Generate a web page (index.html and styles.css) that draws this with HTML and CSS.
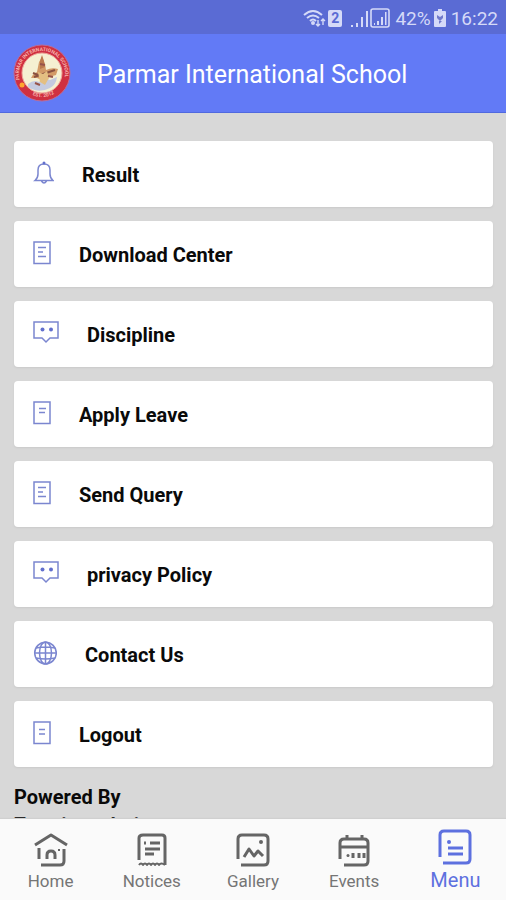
FILE: index.html
```html
<!DOCTYPE html>
<html lang="en">
<head>
<meta charset="utf-8">
<meta name="viewport" content="width=device-width, initial-scale=1">
<title>Parmar International School</title>
<link rel="stylesheet" href="styles.css">
</head>
<body>
<div class="status">
  <svg class="wifi" width="24" height="18" viewBox="0 0 24 18" fill="none" stroke="currentColor" stroke-width="2"><path d="M1 6Q10-2 19 6M4 9Q10 4 16 9M7 12Q10 9 13 12"/><circle cx="10" cy="14" r="1" fill="currentColor"/><path d="M15 11v6M13 15l2 2 2-2M20 16v-6M18 12l2-2 2 2" stroke-width="1.4"/></svg>
  <span class="sim">2</span>
  <svg class="signal" width="18" height="19" viewBox="0 0 18 19" fill="currentColor"><path d="M0 16h2v2H0zM5 14h2v4H5zM10 8h2v10h-2zM15 2h2v16h-2z"/></svg>
  <svg width="20" height="20" viewBox="0 0 20 20"><rect x="1" y="1" width="18" height="18" rx="2" fill="none" stroke="currentColor" stroke-width="1.6"/><path d="M4 15h1v2H4zM7 13h2v4H7zM11 9h2v8h-2zM15 4h1.500v13H15z" fill="currentColor"/></svg>
  <span class="percent">42%</span>
  <svg class="battery" width="12" height="18" viewBox="0 0 12 18"><path d="M4 0h4v2h3q1 0 1 1v14q0 1-1 1H1q-1 0-1-1V3q0-1 1-1h3z" fill="currentColor"/><path d="M3 6l3 2 3-2v3L6 12 3 9zM5 12h3l-3 3z" fill="#7079cb"/></svg>
  <span>16:22</span>
</div>
<header class="header">
  <svg class="logo" width="58" height="58" viewBox="0 0 58 58" role="img" aria-label="School crest">
    <defs><path id="ring-top" d="M10 43A23 23 0 1 1 48 43"/><path id="ring-bottom" d="M12 46A24 24 0 0 0 46 46"/></defs>
    <circle cx="29" cy="29" r="28" fill="#cf3041" stroke="#ba6c98"/>
    <circle cx="29" cy="29" r="20" fill="#f5f0d2" stroke="#efa79a"/>
    <text class="crest-text"><textPath href="#ring-top" startOffset="8">PARMAR INTERNATIONAL SCHOOL</textPath></text>
    <text class="crest-text"><textPath href="#ring-bottom" startOffset="9">EST. 2012</textPath></text>
    <circle cx="9" cy="41" r="2.500" fill="#ffa62f"/>
    <path d="M15 40q6-5 11-2 5-5 11-2l7-3q-1 8-7 11-10 5-18 1-5-1-4-5z" fill="#c5cbe0"/>
    <path d="M18 34q2-4 6-6l2-10 3-5 3 7 1 6q6-3 12-1l-2 6-7 2-4-2-3 5-5-2z" fill="#d39a67"/>
    <path d="M27 17l2-6 2 6 1 6-5 2z" fill="#bb794c"/>
    <path d="M21 33l21-7M20 29l8 3" stroke="#8a5140" stroke-width="2"/>
    <path d="M25 28l5 2 4-3 2 7-4 7-5-3z" fill="#e4bf82"/><path d="M22 39l5 2M35 32l5 1M27 20l5 1" stroke="#975348" stroke-width="2"/>
  </svg>
  <h1 class="title">Parmar International School</h1>
</header>
<main class="content">
  <nav class="list" aria-label="School menu">
    <a class="card" href="#result"><svg class="icon" width="21" height="24" viewBox="0 0 21 24"><path d="M2 19.500Q5 17 5 13V9Q5 3 11 3t6 6v4q0 4 3 6.500zM8.500 20q2.500 4 5 0"/><circle class="dot" cx="11" cy="2" r="1.500"/></svg><span>Result</span></a>
    <a class="card" href="#download"><svg class="icon" width="18" height="24" viewBox="0 0 18 24"><path d="M1 1h16v21.500H1zM5 6.500h8M5 11h5M5 15.500h8"/></svg><span>Download Center</span></a>
    <a class="card" href="#discipline"><svg class="icon" width="26" height="24" viewBox="0 0 26 24"><path d="M1 1h24v16h-8l-4 4-4-4H1z"/><circle class="dot" cx="9.500" cy="8.500" r="2"/><circle class="dot" cx="18" cy="8.500" r="2"/></svg><span>Discipline</span></a>
    <a class="card" href="#leave"><svg class="icon" width="18" height="24" viewBox="0 0 18 24"><path d="M1 1h16v21.500H1zM6 7.500h7M6 11.500h6"/></svg><span>Apply Leave</span></a>
    <a class="card" href="#query"><svg class="icon" width="18" height="24" viewBox="0 0 18 24"><path d="M1 1h16v21.500H1zM5 6.500h8M5 11h5M5 15.500h8"/></svg><span>Send Query</span></a>
    <a class="card" href="#privacy"><svg class="icon" width="26" height="24" viewBox="0 0 26 24"><path d="M1 1h24v16h-8l-4 4-4-4H1z"/><circle class="dot" cx="9.500" cy="8.500" r="2"/><circle class="dot" cx="18" cy="8.500" r="2"/></svg><span>privacy Policy</span></a>
    <a class="card" href="#contact"><svg class="icon" width="24" height="24" viewBox="0 0 24 24"><circle cx="12.500" cy="12" r="10.800"/><path d="M12.500 1v22M1.500 12h22M3 7q9.500-2 19 0M3 17q9.500 2 19 0"/><ellipse cx="12.500" cy="12" rx="6" ry="11"/></svg><span>Contact Us</span></a>
    <a class="card" href="#logout"><svg class="icon" width="18" height="24" viewBox="0 0 18 24"><path d="M1 1h16v21.500H1zM6 8.500h6M6 13h6"/></svg><span>Logout</span></a>
  </nav>
  <footer class="credit">Powered By<br>Zerationsolutions</footer>
</main>
<nav class="tabs" aria-label="Main">
  <a class="tab" href="#home"><svg width="36" height="36" viewBox="0 0 36 36"><path d="M2 13L18 3l16 10M6 16v11M8 33h19q4 0 4-4V17M14 27v-4q0-4 4-4t4 4v4"/><path class="fine" d="M25 18h2"/></svg><span>Home</span></a>
  <a class="tab" href="#notices"><svg width="36" height="36" viewBox="0 0 36 36"><path d="M5 28V6q0-3 4-3h19q3 0 3 3v27M11 17h15M11 22h9M16 11h10M10 11h2"/><path class="fine" d="M5 33q2-3 4 0 2-3 4 0 2-3 4 0 2-3 4 0 2-3 4 0 2-3 6 0"/></svg><span>Notices</span></a>
  <a class="tab" href="#gallery"><svg width="36" height="36" viewBox="0 0 36 36"><path d="M3 27V7q0-4 4-4h22q4 0 4 4v22q0 4-4 4H6M9 25l5-8 5 7 4-5 5 5"/><circle class="tab-dot" cx="26" cy="10" r="2"/></svg><span>Gallery</span></a>
  <a class="tab" href="#events"><svg width="36" height="36" viewBox="0 0 36 36"><path d="M4 27V11q0-4 4-4h20q4 0 4 4v18q0 4-4 4H8M4 15h28M11 3v4M26 3v4M17 21v5M23 21v5M28 21v5"/><circle class="tab-dot" cx="12" cy="23.500" r="1.500"/></svg><span>Events</span></a>
  <a class="tab active" href="#menu" aria-current="page"><svg width="36" height="36" viewBox="0 0 36 36"><path d="M3 28V6q0-4 4-4h22q4 0 4 4v24q0 4-4 4H6M11 19h15M11 25h15"/><circle class="tab-dot" cx="12" cy="13" r="2"/></svg><span>Menu</span></a>
</nav>
</body>
</html>
```
FILE: styles.css
```css
* { box-sizing: border-box; }
body {
  margin: 0;
  height: 100vh;
  display: flex;
  flex-direction: column;
  overflow: hidden;
  background: #d8d8d8;
  font-family: Roboto, sans-serif;
}
a { color: inherit; text-decoration: none; }
svg { flex: none; display: block; }
.status {
  flex: none;
  display: flex;
  align-items: center;
  justify-content: flex-end;
  gap: 5px;
  padding: 2px 8px 0 0;
  height: 34px;
  background: #5a6bd4;
  color: #d5daf8;
  font-size: 19px;
}
.wifi { margin-right: -4px; }
.sim {
  width: 14px;
  margin-right: 4px;
  border-radius: 2px;
  background: #d5daf8;
  color: #5a6bd4;
  font-size: 14px;
  font-weight: 700;
  line-height: 17px;
  text-align: center;
}
.signal { margin-right: -4px; }
.percent { margin-right: -2px; }
.header {
  flex: none;
  display: flex;
  align-items: center;
  gap: 26px;
  height: 79px;
  padding-left: 13px;
  background: #627af6;
  border-bottom: 1px solid #5069df;
  color: #fff;
}
.title {
  margin: 0;
  padding-top: 4px;
  font-size: 25px;
  font-weight: 400;
  line-height: 32px;
}
.crest-text { fill: #f6b4ad; font-size: 5px; font-weight: 700; }
.content {
  flex: 1;
  min-height: 0;
  overflow: hidden;
  padding: 28px 13px 0 14px;
}
.list { display: flex; flex-direction: column; gap: 14px; }
.card {
  display: flex;
  align-items: flex-start;
  gap: 28px;
  padding: 20px 19px 18px;
  border-radius: 4px;
  background: #fff;
  box-shadow: 0 1px 2px #c9c9c9;
  color: #0a0a0a;
  font-size: 20px;
  font-weight: 700;
  line-height: 28px;
}
.icon {
  fill: none;
  stroke: #7b86d0;
  stroke-width: 1.5;
}
.dot { fill: #6270cd; stroke: none; }
.credit {
  padding-top: 16px;
  color: #0a0a0a;
  font-size: 20px;
  font-weight: 700;
  line-height: 28px;
}
.tabs {
  flex: none;
  display: grid;
  grid-template-columns: repeat(5, 1fr);
  height: 81px;
  background: #fafafa;
  box-shadow: 0 -1px 1px #d0d0d0;
}
.tab {
  display: flex;
  flex-direction: column;
  align-items: center;
  gap: 1px;
  padding-top: 13px;
  color: #757575;
  font-size: 17px;
  line-height: 24px;
}
.tab svg { fill: none; stroke: #656565; stroke-width: 3; stroke-linejoin: round; }
.tab .fine { stroke-width: 2; }
.tab .tab-dot { fill: #656565; stroke: none; }
.active { padding-top: 10px; color: #5d70df; font-size: 20px; gap: 3px; }
.tab.active svg { stroke: #5d70df; }
.tab.active .tab-dot { fill: #5d70df; }
```
